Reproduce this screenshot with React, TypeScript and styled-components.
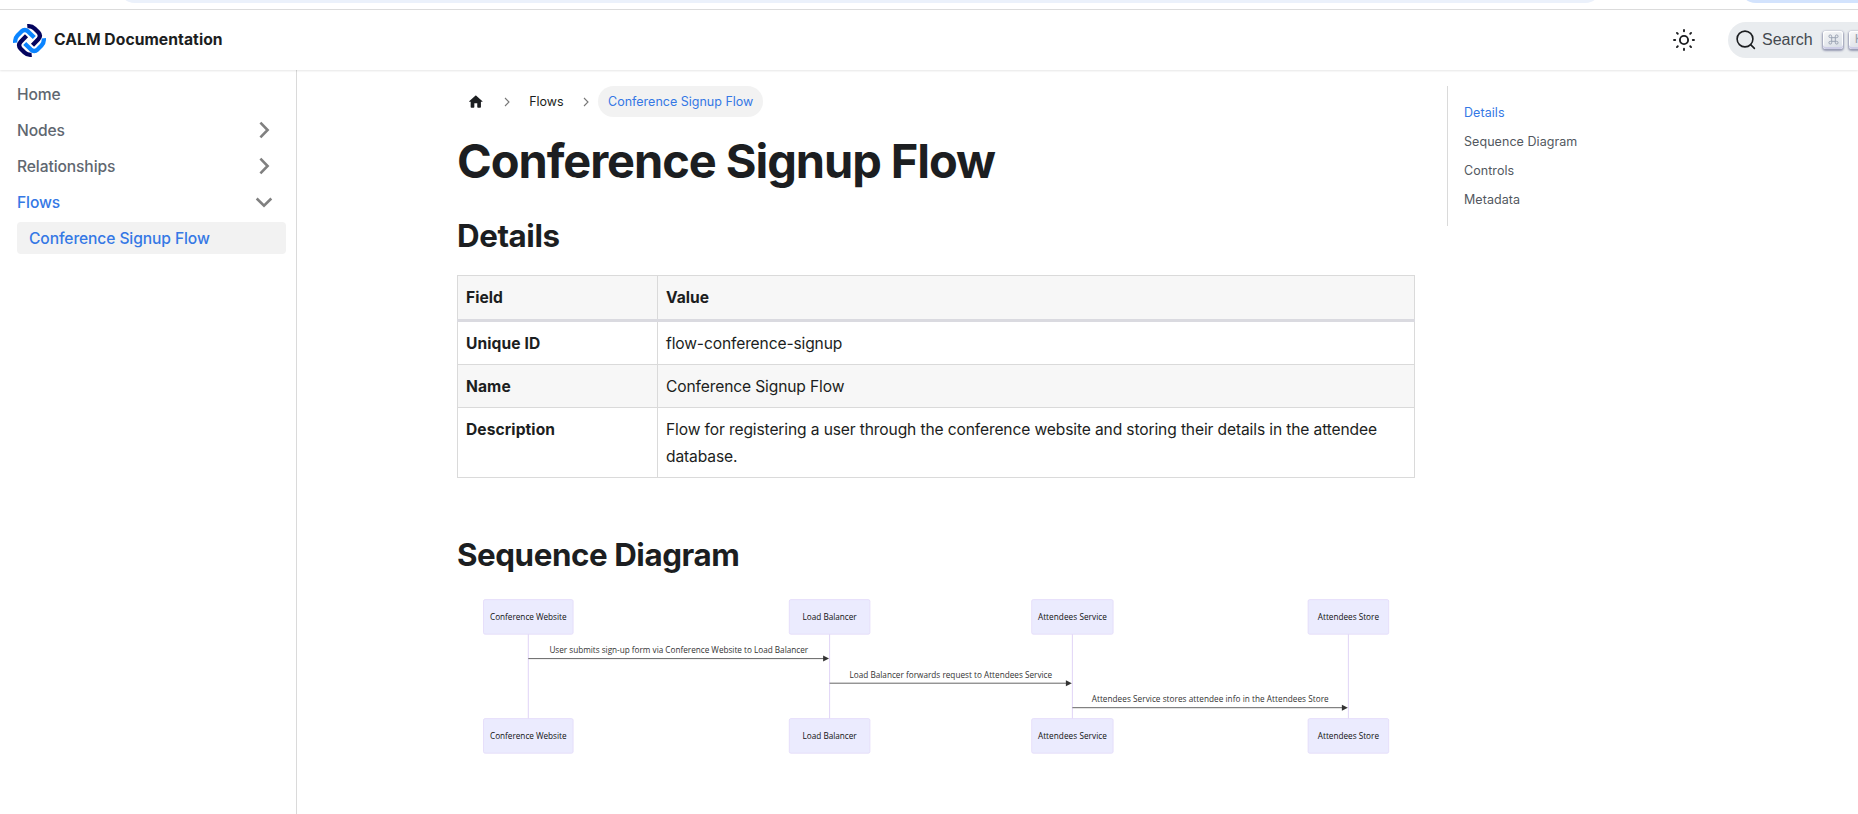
import React from "react";
import styled, { createGlobalStyle } from "styled-components";

const INK = "#1c1e21";
const MUTED = "#606770";
const BLUE = "#3578e5";
const LINE = "#dadada";

const GlobalStyle = createGlobalStyle`
  * { box-sizing: border-box; }
  body {
    margin: 0;
    overflow: hidden;
    background: #fff;
    color: ${INK};
    font-family: Inter, "Liberation Sans", sans-serif;
    font-size: 15.6px;
    line-height: 26.4px;
  }
`;

const Page = styled.div`
  display: flex;
  flex-direction: column;
  width: 1858px;
  height: 814px;
  overflow: hidden;
`;

const BrowserStrip = styled.div`
  display: flex;
  align-items: flex-end;
  justify-content: space-between;
  height: 10px;
  flex: none;
  padding: 0 0 6px 118px;
  overflow: hidden;
  border-bottom: 1px solid #dcdcdc;
`;

const StripPill = styled.div<{ $width: number; $color: string; $open?: boolean }>`
  flex: none;
  width: ${(p) => p.$width}px;
  height: 34px;
  background: ${(p) => p.$color};
  border-radius: ${(p) => (p.$open ? "17px 0 0 17px" : "17px")};
`;

const Navbar = styled.header`
  position: relative;
  display: flex;
  align-items: center;
  flex: none;
  height: 60px;
  padding-left: 13px;
  background: #fff;
  box-shadow: 0 1px 2px rgba(0, 0, 0, 0.1);
`;

const Brand = styled.div`
  display: flex;
  align-items: center;
  gap: 8px;
  flex: 1;
  font-size: 15.7px;
  font-weight: 700;
  letter-spacing: 0.05px;
`;

const BrandName = styled.span`
  padding-top: 1px;
`;

const ThemeToggle = styled.div`
  display: flex;
  margin-right: 32px;
`;

const SearchButton = styled.div`
  display: flex;
  align-items: center;
  flex: none;
  width: 130px;
  height: 36px;
  padding-left: 8px;
  background: #e9ecef;
  border-radius: 18px 0 0 18px;
  color: #444950;
  font-family: "Liberation Sans", sans-serif;
  font-size: 16px;
  overflow: hidden;
`;

const SearchLabel = styled.span`
  flex: none;
  width: 67px;
  padding-left: 6px;
`;

const Key = styled.kbd`
  display: flex;
  align-items: center;
  justify-content: center;
  flex: none;
  width: 20px;
  height: 18px;
  margin: 0 6px 1px 0;
  padding-bottom: 1px;
  border-radius: 3px;
  background: linear-gradient(-26deg, #d5dbe4, #f8f8f8);
  box-shadow: inset 0 -2px 0 0 #cdcde6, inset 0 0 1px 1px #fff, 0 1px 2px 1px rgba(30, 35, 90, 0.4);
  color: #969faf;
  font-family: "Liberation Sans", sans-serif;
  font-size: 13px;
`;

const Body = styled.div`
  display: flex;
  flex: 1;
  min-height: 0;
`;

const Sidebar = styled.nav`
  display: flex;
  flex-direction: column;
  gap: 4px;
  flex: none;
  width: 297px;
  padding: 8px 10px 0 17px;
  border-right: 1px solid ${LINE};
`;

const MenuItem = styled.div<{ $active?: boolean; $nested?: boolean }>`
  display: flex;
  align-items: center;
  justify-content: space-between;
  height: 32px;
  padding: 0 ${(p) => (p.$nested ? 12 : 13)}px 0 ${(p) => (p.$nested ? 12 : 0)}px;
  border-radius: 4px;
  background: ${(p) => (p.$nested ? "#f2f2f2" : "transparent")};
  color: ${(p) => (p.$active ? BLUE : MUTED)};
  font-weight: 500;
  letter-spacing: -0.1px;
`;

const MenuLabel = styled.span`
  padding-top: 2px;
`;

const Article = styled.main`
  flex: none;
  width: 958px;
  margin-left: 160px;
  padding-top: 16px;
`;

const Breadcrumbs = styled.div`
  display: flex;
  align-items: center;
  height: 31px;
  font-size: 12.5px;
  line-height: 31px;
`;

const Crumb = styled.span<{ $active?: boolean }>`
  display: flex;
  align-items: center;
  height: 31px;
  padding: 0 10.2px;
  border-radius: 16px;
  background: ${(p) => (p.$active ? "#f2f2f2" : "transparent")};
  color: ${(p) => (p.$active ? BLUE : INK)};
`;

const CrumbArrow = styled.span`
  display: flex;
  justify-content: center;
  width: 24px;
`;

const Title = styled.h1`
  margin: 14px 0 0;
  font-size: 47px;
  line-height: 60px;
  font-weight: 700;
  letter-spacing: -1.07px;
`;

const Heading = styled.h2<{ $top: number }>`
  margin: ${(p) => p.$top}px 0 0;
  font-size: 31.3px;
  line-height: 40px;
  font-weight: 700;
  letter-spacing: -0.42px;
`;

const Table = styled.table`
  width: 958px;
  margin-top: 19px;
  border-collapse: collapse;
  table-layout: fixed;
`;

const Row = styled.tr<{ $shaded?: boolean }>`
  background: ${(p) => (p.$shaded ? "#f7f7f7" : "#fff")};
`;

const HeadCell = styled.th<{ $width?: number }>`
  width: ${(p) => (p.$width ? `${p.$width}px` : "auto")};
  padding: 9px 8px 8px;
  border: 1px solid ${LINE};
  border-bottom: 3px solid #dadae0;
  text-align: left;
  font-weight: 700;
`;

const Cell = styled.td<{ $strong?: boolean }>`
  padding: 9px 8px 7px;
  border: 1px solid ${LINE};
  vertical-align: top;
  font-weight: ${(p) => (p.$strong ? 700 : 400)};
  letter-spacing: ${(p) => (p.$strong ? 0.08 : -0.13)}px;

  ${Row}:first-child > & {
    padding-bottom: 6px;
  }
`;

const Toc = styled.aside`
  flex: none;
  align-self: flex-start;
  width: 240px;
  height: 140px;
  margin: 16px 0 0 32px;
  padding: 12px 0 0 16px;
  border-left: 1px solid ${LINE};
  font-size: 12.5px;
  line-height: 29px;
  letter-spacing: 0.06px;
`;

const TocLink = styled.div<{ $active?: boolean }>`
  color: ${(p) => (p.$active ? BLUE : "#525860")};
`;

const Diagram = styled.svg`
  display: block;
  width: 958px;
  height: 200px;
  font-family: "Open Sans", "Noto Sans", sans-serif;
  font-size: 8.2px;
  font-variant-ligatures: none;
`;

const Logo = () => (
  <svg width="33" height="33" viewBox="-16.5 -16.5 33 33" fill="none" strokeWidth="4.3" strokeLinejoin="round">
    {[0, 90, 180, 270].map((angle) => (
      <path
        key={angle}
        transform={`rotate(${angle})`}
        stroke={angle % 180 === 0 ? "#0a84ff" : "#04045e"}
        d="M-14.3 2.2 C-14.6 -1 -13.8 -3.2 -12 -5 L-8.2 -8.8 C-6 -10.8 -3.4 -10.8 -1.2 -8.8 L4.8 -3"
      />
    ))}
  </svg>
);

const Sun = () => (
  <svg width="24" height="24" viewBox="-12 -12 24 24" fill="none" stroke={INK} strokeWidth="1.9">
    <circle r="4.1" />
    {[0, 45, 90, 135, 180, 225, 270, 315].map((angle) => (
      <path key={angle} transform={`rotate(${angle})`} strokeLinecap="round" d="M8.8 0 H10" />
    ))}
  </svg>
);

const MagnifierIcon = styled.svg`
  flex: none;
`;

const Magnifier = () => (
  <MagnifierIcon width="20" height="20" viewBox="0 0 20 20" fill="none" stroke={INK} strokeWidth="1.6" strokeLinecap="round">
    <circle cx="9" cy="9" r="7.9" />
    <path d="M14.6 14.6 L18.4 18.4" />
  </MagnifierIcon>
);

const CommandGlyph = () => (
  <svg width="11" height="11" viewBox="0 0 12 12" fill="none" stroke="#969faf" strokeWidth="1">
    <path d="M4 4 H8 V8 H4 Z M4 4 H2.5 A1.5 1.5 0 1 1 4 2.5 Z M8 4 V2.5 A1.5 1.5 0 1 1 9.5 4 Z M8 8 H9.5 A1.5 1.5 0 1 1 8 9.5 Z M4 8 V9.5 A1.5 1.5 0 1 1 2.5 8 Z" />
  </svg>
);

const Chevron = ({ open }: { open?: boolean }) => (
  <svg width="18" height="18" viewBox="-9 -9 18 18" fill="none" stroke="#808080" strokeWidth="2.6">
    <path d={open ? "M-7.3 -3.5 L0 3.6 L7.3 -3.5" : "M-3.6 -7.3 L3.6 0 L-3.6 7.3"} />
  </svg>
);

const House = () => (
  <svg width="17.6" height="17.6" viewBox="0 0 24 24" fill={INK}>
    <path d="M10 19v-5h4v5c0 .55.45 1 1 1h3c.55 0 1-.45 1-1v-7h1.7c.46 0 .68-.57.33-.87L12.67 3.6c-.38-.34-.96-.34-1.34 0l-8.36 7.53c-.34.3-.13.87.33.87H5v7c0 .55.45 1 1 1h3c.55 0 1-.45 1-1z" />
  </svg>
);

const SmallArrow = () => (
  <svg width="6" height="10" viewBox="0 0 6 10" fill="none" stroke="#777" strokeWidth="1.1">
    <path d="M1 1 L5 5 L1 9" />
  </svg>
);

const actors = [
  { name: "Conference Website", x: 71.3, width: 89.6, text: 76.5 },
  { name: "Load Balancer", x: 372.6, width: 80.6, text: 54 },
  { name: "Attendees Service", x: 615.4, width: 81.4, text: 69 },
  { name: "Attendees Store", x: 891.4, width: 80.6, text: 61.2 },
];

const messages = [
  { label: "User submits sign-up form via Conference Website to Load Balancer", from: 0, to: 1, y: 83.6, text: 258.7 },
  { label: "Load Balancer forwards request to Attendees Service", from: 1, to: 2, y: 108.2, text: 202.7 },
  { label: "Attendees Service stores attendee info in the Attendees Store", from: 2, to: 3, y: 132.7, text: 237 },
];

const SequenceDiagram = () => (
  <Diagram viewBox="0 0 958 200">
    {actors.map((a) => (
      <g key={a.name}>
        <line x1={a.x} x2={a.x} y1={59} y2={144} stroke="#dccff5" strokeWidth={0.9} />
        {[24.6, 143.6].map((y) => (
          <g key={y}>
            <rect x={a.x - a.width / 2} y={y} width={a.width} height={34.6} rx={1.6} fill="#ebebfe" stroke="#e2d9f9" strokeWidth={0.8} />
            <text x={a.x} y={y + 20.4} textAnchor="middle" textLength={a.text} fill="#111">
              {a.name}
            </text>
          </g>
        ))}
      </g>
    ))}
    {messages.map((m) => {
      const start = actors[m.from].x;
      const end = actors[m.to].x - 1;
      return (
        <g key={m.label}>
          <text x={(start + end) / 2 + 0.3} y={m.y - 5.3} textAnchor="middle" textLength={m.text} fill="#333">
            {m.label}
          </text>
          <line x1={start} x2={end - 4} y1={m.y} y2={m.y} stroke="#555" strokeWidth={0.9} />
          <path d={`M${end - 5.5} ${m.y - 3} L${end + 0.4} ${m.y} L${end - 5.5} ${m.y + 3} Z`} fill="#333" />
        </g>
      );
    })}
  </Diagram>
);

const details = [
  ["Unique ID", "flow-conference-signup"],
  ["Name", "Conference Signup Flow"],
  [
    "Description",
    "Flow for registering a user through the conference website and storing their details in the attendee database.",
  ],
];

export default function App() {
  return (
    <Page>
      <GlobalStyle />
      <BrowserStrip>
        <StripPill $width={1484} $color="#ebf1fb" />
        <StripPill $width={119} $color="#d3e3fd" $open />
      </BrowserStrip>
      <Navbar>
        <Brand>
          <Logo />
          <BrandName>CALM Documentation</BrandName>
        </Brand>
        <ThemeToggle>
          <Sun />
        </ThemeToggle>
        <SearchButton>
          <Magnifier />
          <SearchLabel>Search</SearchLabel>
          <Key>
            <CommandGlyph />
          </Key>
          <Key>K</Key>
        </SearchButton>
      </Navbar>
      <Body>
        <Sidebar>
          <MenuItem>
            <MenuLabel>Home</MenuLabel>
          </MenuItem>
          <MenuItem>
            <MenuLabel>Nodes</MenuLabel>
            <Chevron />
          </MenuItem>
          <MenuItem>
            <MenuLabel>Relationships</MenuLabel>
            <Chevron />
          </MenuItem>
          <MenuItem $active>
            <MenuLabel>Flows</MenuLabel>
            <Chevron open />
          </MenuItem>
          <MenuItem $active $nested>
            <MenuLabel>Conference Signup Flow</MenuLabel>
          </MenuItem>
        </Sidebar>
        <Article>
          <Breadcrumbs>
            <Crumb>
              <House />
            </Crumb>
            <CrumbArrow>
              <SmallArrow />
            </CrumbArrow>
            <Crumb>Flows</Crumb>
            <CrumbArrow>
              <SmallArrow />
            </CrumbArrow>
            <Crumb $active>Conference Signup Flow</Crumb>
          </Breadcrumbs>
          <Title>Conference Signup Flow</Title>
          <Heading $top={25}>Details</Heading>
          <Table>
            <thead>
              <Row as="tr" $shaded>
                <HeadCell $width={200}>Field</HeadCell>
                <HeadCell>Value</HeadCell>
              </Row>
            </thead>
            <tbody>
              {details.map(([field, value], i) => (
                <Row key={field} $shaded={i % 2 === 1}>
                  <Cell $strong>{field}</Cell>
                  <Cell>{value}</Cell>
                </Row>
              ))}
            </tbody>
          </Table>
          <Heading $top={57}>Sequence Diagram</Heading>
          <SequenceDiagram />
        </Article>
        <Toc>
          <TocLink $active>Details</TocLink>
          <TocLink>Sequence Diagram</TocLink>
          <TocLink>Controls</TocLink>
          <TocLink>Metadata</TocLink>
        </Toc>
      </Body>
    </Page>
  );
}
